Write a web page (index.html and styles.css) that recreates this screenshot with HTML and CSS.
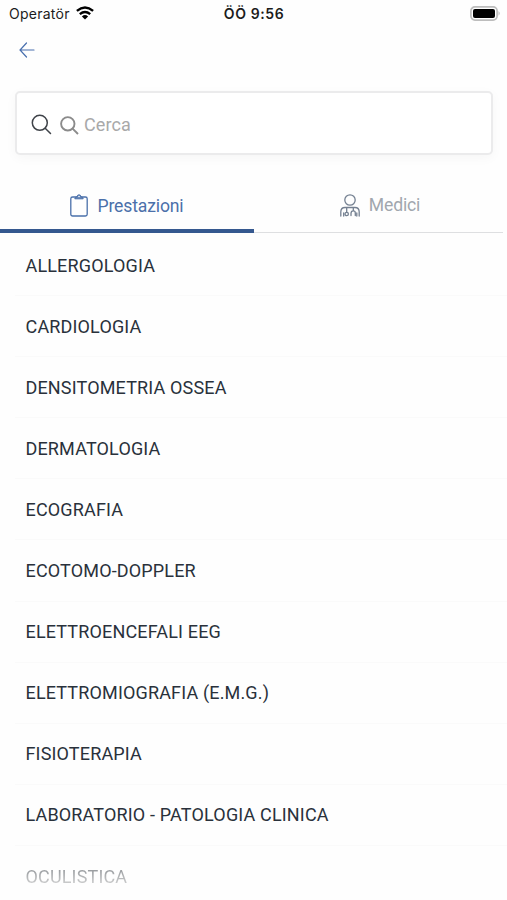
FILE: index.html
```html
<!DOCTYPE html>
<html lang="it">
<head>
<meta charset="utf-8">
<title>Prestazioni</title>
<link rel="stylesheet" href="styles.css">
</head>
<body>
<header class="status">
  <div class="carrier"><span>Operatör</span>
    <svg class="wifi" width="18" height="14" viewBox="0 0 18 14" fill="none" stroke="#000" stroke-width="2.4"><path d="M.9 4.8Q9-2 17.1 4.8M3.8 8.1Q9 3.8 14.2 8.1"/><path d="M9 13.6L5.9 10.4Q9 7.8 12.1 10.4Z" fill="#000" stroke="none"/></svg>
  </div>
  <div class="clock">ÖÖ 9:56</div>
  <svg class="battery" width="31" height="15" viewBox="0 0 31 15"><rect x=".9" y=".9" width="26.2" height="13.2" rx="4" fill="#fff" stroke="#bdbdbd" stroke-width="1.7"/><rect x="3" y="3" width="22" height="9" rx="2" fill="#000"/><path d="M28.5 5Q31 7.3 28.5 9.8Z" fill="#bdbdbd"/></svg>
</header>
<nav class="nav">
  <svg width="16" height="16" viewBox="0 0 16 16" fill="none" stroke="#486fae" stroke-width="1.2" stroke-linecap="round"><path d="M15 8H1M7.5 1L1 8L7.5 15"/></svg>
</nav>
<div class="search">
  <svg class="lens" width="21" height="21" viewBox="0 0 21 21" fill="none" stroke="#3f4349" stroke-width="1.5" stroke-linecap="round"><circle cx="8.8" cy="8.8" r="7.5"/><path d="M14.2 14.2L19.5 19.5"/></svg>
  <svg class="lens-hint" width="19" height="19" viewBox="0 0 19 19" fill="none" stroke="#8b8b8b" stroke-width="1.9"><circle cx="7.8" cy="7.8" r="6.7"/><path d="M12.6 12.6L18 18"/></svg>
  <span>Cerca</span>
</div>
<div class="tabs">
  <div class="tab active">
    <svg width="18" height="23" viewBox="0 0 18 23" fill="none" stroke="#4a70aa" stroke-width="1.3"><rect x=".8" y="3" width="16.4" height="19" rx="1.8"/><path d="M4.8 4.8Q5 2.8 7 2.8Q7.2 .8 9 .8T11 2.8Q13 2.8 13.2 4.8Z" fill="#6485b7" stroke-width="1"/><circle cx="9" cy="2.5" r=".8" fill="#fff" stroke="none"/></svg>
    <span>Prestazioni</span>
  </div>
  <div class="tab">
    <svg width="20" height="23" viewBox="0 0 20 23" fill="none" stroke="#748091" stroke-width="1.3" stroke-linecap="round"><circle cx="10" cy="6" r="5.2"/><path d="M.8 22V18Q.8 13.5 5 13.5H15Q19.2 13.5 19.2 18V22M3.7 22V19M16.8 22V19M6.7 13.5V18M13.3 13.5V16.8M11 21.5V19.5Q11 16.8 13.2 16.8T15.3 19.5V21.5"/><circle cx="6.7" cy="20" r="1.7"/></svg>
    <span>Medici</span>
  </div>
</div>
<main class="list">
  <div class="row"><span>ALLERGOLOGIA</span></div>
  <div class="row"><span>CARDIOLOGIA</span></div>
  <div class="row"><span>DENSITOMETRIA OSSEA</span></div>
  <div class="row"><span>DERMATOLOGIA</span></div>
  <div class="row"><span>ECOGRAFIA</span></div>
  <div class="row"><span>ECOTOMO-DOPPLER</span></div>
  <div class="row"><span>ELETTROENCEFALI EEG</span></div>
  <div class="row"><span>ELETTROMIOGRAFIA (E.M.G.)</span></div>
  <div class="row"><span>FISIOTERAPIA</span></div>
  <div class="row"><span>LABORATORIO - PATOLOGIA CLINICA</span></div>
  <div class="row"><span class="faded">OCULISTICA</span></div>
</main>
</body>
</html>
```
FILE: styles.css
```css
* { box-sizing: border-box; }
body { margin: 0; width: 507px; height: 900px; overflow: hidden; background: #fefefe; font-family: Roboto, "Liberation Sans", sans-serif; color: #29313b; }
svg { display: block; flex: none; }
.status { height: 28px; display: grid; grid-template-columns: 1fr auto 1fr; align-items: center; padding: 0 6px 2px 9px; font-family: Inter, sans-serif; font-size: 14px; color: #1c1c1c; }
.carrier { display: flex; align-items: center; gap: 6px; letter-spacing: .25px; }
.wifi { margin-top: -1px; }
.clock { font-weight: 600; font-size: 14px; letter-spacing: .6px; margin-left: -2px; }
.battery { justify-self: end; }
.nav { height: 44px; padding: 14px 19px; }
.search { margin: 19px 15px 0; height: 64px; width: 478px; border: 2px solid #ebebec; border-radius: 5px; background: #fff; box-shadow: 0 3px 12px rgba(0,0,0,.035); display: flex; align-items: center; padding: 2px 0 0 14px; font-size: 18px; color: #a9a9a9; }
.search span { margin-top: 1px; letter-spacing: .1px; }
.lens-hint { margin: 2px 5px 0 8px; }
.tabs { display: flex; height: 78px; width: 503px; border-bottom: 1.5px solid #dedfe1; font-size: 17.6px; letter-spacing: -.15px; color: #a1a7ae; }
.tab { flex: 1; display: flex; justify-content: center; align-items: center; gap: 9px; padding: 23px 0 0 3px; }
.tab.active { flex: 0 0 254px; color: #4b70aa; border-bottom: 4px solid #35588f; padding: 27px 0 0; margin-bottom: -1px; }
.list { padding-top: 2px; }
.row { height: 61.1px; margin-left: 15px; padding-left: 10.5px; display: flex; align-items: center; font-size: 18px; letter-spacing: .16px; border-bottom: 1px solid #fafafa; }
.row:last-child { border-bottom: 0; }
.faded { background: linear-gradient(#8b8f93, #d8d8d8); background-clip: text; -webkit-background-clip: text; color: transparent; }
```
